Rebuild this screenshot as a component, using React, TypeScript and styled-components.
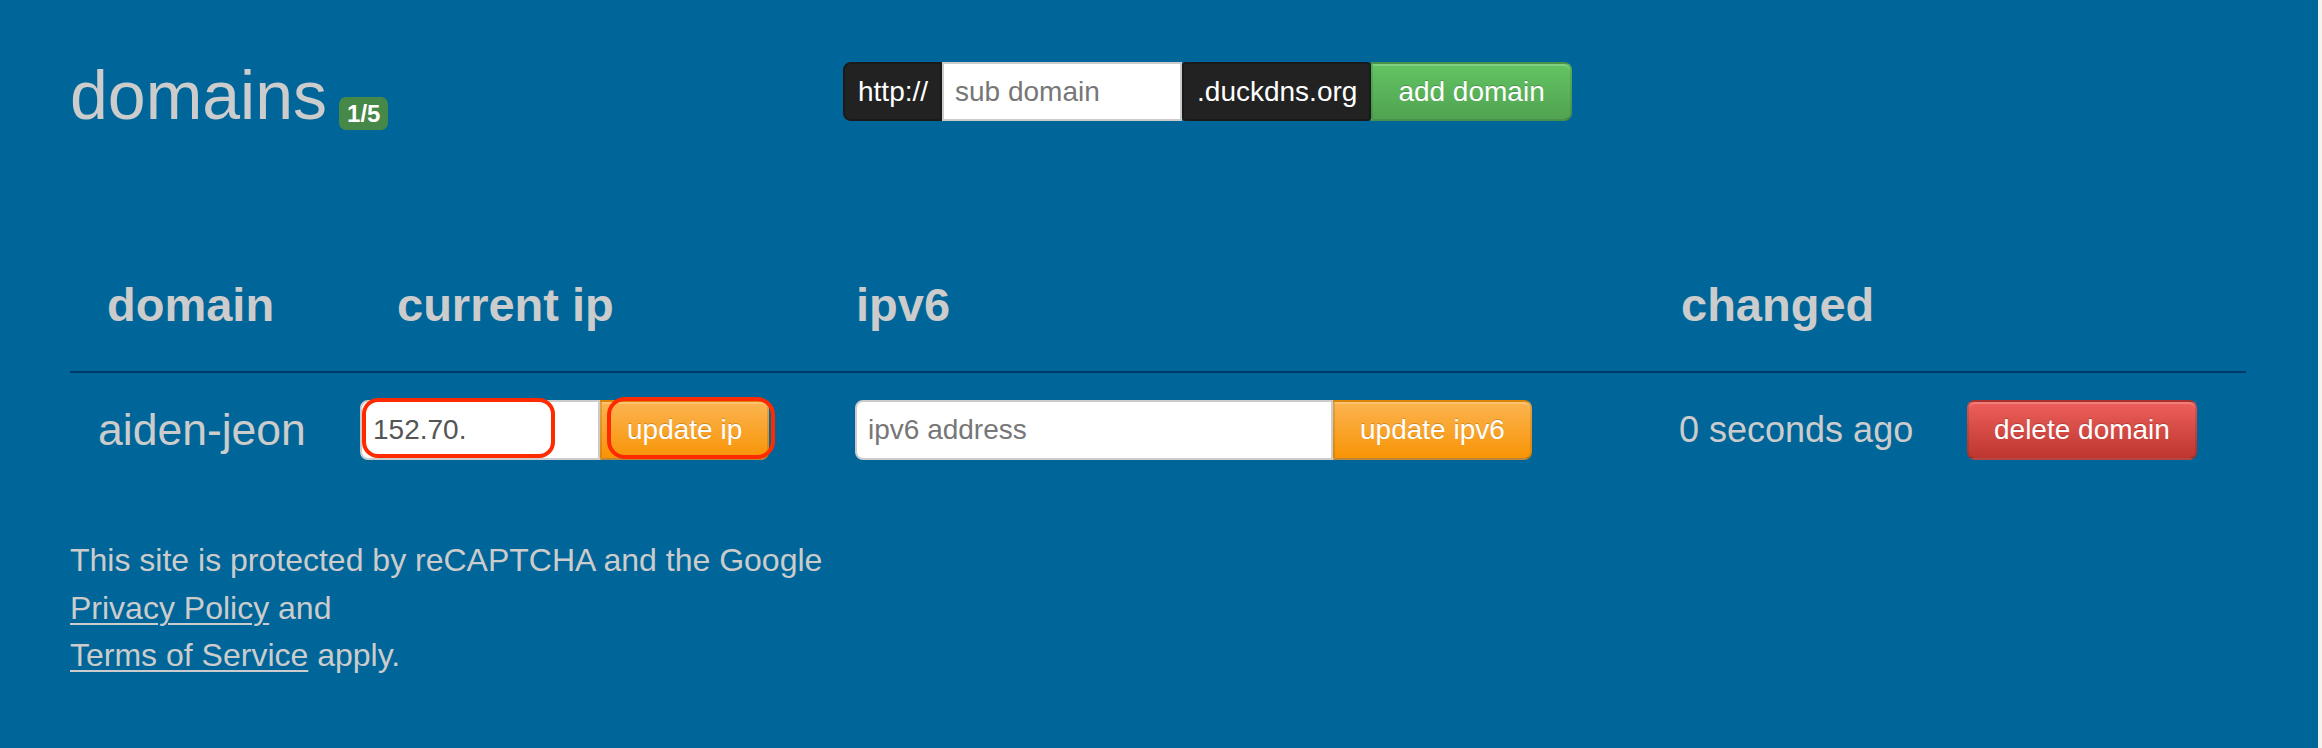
import React from "react";
import styled, { createGlobalStyle } from "styled-components";

const Global = createGlobalStyle`
  html, body { margin: 0; padding: 0; background: #f4f3ef; }
  body { font-family: "Liberation Sans", Arial, Helvetica, sans-serif; }
  * { box-sizing: border-box; }
`;

const Page = styled.div`
  position: relative;
  width: calc(100% - 4px);
  min-height: 748px;
  background: #006699;
  padding: 0 72px 0 70px;
  color: #cccccc;
`;

const TopBar = styled.div`
  display: grid;
  grid-template-columns: 773px auto;
  align-items: start;
  padding-top: 61px;
  height: 129px;
`;

const Title = styled.h1`
  margin: 0;
  font-size: 68px;
  line-height: 68px;
  font-weight: 400;
  color: #cccccc;
  white-space: nowrap;
`;

const Badge = styled.span`
  display: inline-block;
  margin-left: 12px;
  padding: 5px 8px 4px;
  font-size: 24px;
  line-height: 24px;
  font-weight: 700;
  color: #ffffff;
  background: #468847;
  border-radius: 7px;
  vertical-align: -3px;
`;

const AddForm = styled.div`
  display: flex;
  height: 59px;
  margin-top: 1px;
`;

const AddOn = styled.span<{ $radius: string }>`
  display: flex;
  align-items: center;
  height: 100%;
  padding: 0 12px 0 13px;
  background: #222222;
  border: 2px solid #1a1a1a;
  border-radius: ${(p) => p.$radius};
  color: #ffffff;
  font-size: 28px;
  white-space: nowrap;
`;

const TextInput = styled.input<{ $w: number; $radius: string }>`
  width: ${(p) => p.$w}px;
  height: 100%;
  margin: 0;
  padding: 0 11px;
  border: 2px solid #cccccc;
  border-radius: ${(p) => p.$radius};
  background: #ffffff;
  color: #555555;
  font-family: "Liberation Sans", Arial, sans-serif;
  font-size: 28px;
  outline: none;
  &::placeholder {
    color: #777777;
  }
`;

const Button = styled.button<{ $tone: "success" | "warning" | "danger"; $radius: string }>`
  height: 100%;
  margin: 0;
  padding: 0 25px;
  font-family: "Liberation Sans", Arial, sans-serif;
  font-size: 28px;
  color: #ffffff;
  white-space: nowrap;
  text-shadow: 0 -1px 0 rgba(0, 0, 0, 0.2);
  border: 2px solid rgba(0, 0, 0, 0.1);
  border-bottom-color: rgba(0, 0, 0, 0.25);
  border-radius: ${(p) => p.$radius};
  box-shadow: inset 0 2px 0 rgba(255, 255, 255, 0.2);
  background: ${(p) =>
    p.$tone === "success"
      ? "linear-gradient(#62c462, #51a351)"
      : p.$tone === "warning"
      ? "linear-gradient(#fbb450, #f89406)"
      : "linear-gradient(#ee5f5b, #bd362f)"};
  cursor: pointer;
`;

const Table = styled.div`
  display: grid;
  grid-template-columns: 290px 495px 824px 288px 1fr;
  margin-top: 152px;
`;

const Th = styled.div<{ $pl: number }>`
  padding: 0 0 43px ${(p) => p.$pl}px;
  font-size: 47px;
  line-height: 47px;
  font-weight: 700;
  color: #cccccc;
  border-bottom: 2px solid #01386b;
  white-space: nowrap;
`;

const Td = styled.div<{ $pl: number }>`
  display: flex;
  align-items: center;
  height: 114px;
  padding: 27px 0 27px ${(p) => p.$pl}px;
  white-space: nowrap;
`;

const DomainName = styled.span`
  font-size: 44.5px;
  color: #cccccc;
`;

const TimeAgo = styled.span`
  font-size: 36px;
  color: #cccccc;
`;

const Group = styled.div`
  position: relative;
  display: flex;
  height: 60px;
`;

const Mark = styled.div<{ $r: number }>`
  position: absolute;
  border: 4px solid #ff2a00;
  border-radius: ${(p) => p.$r}px;
  pointer-events: none;
`;

const Footer = styled.p`
  margin: 50px 0 0;
  font-size: 32px;
  line-height: 47.5px;
  color: #cccccc;
`;

const FootLink = styled.a`
  color: #cccccc;
  text-decoration: underline;
  text-decoration-thickness: 2px;
  text-underline-offset: 4px;
`;

export default function App() {
  return (
    <>
      <Global />
      <Page>
        <TopBar>
          <Title>
            domains<Badge>1/5</Badge>
          </Title>
          <AddForm>
            <AddOn $radius="8px 0 0 8px">http://</AddOn>
            <TextInput $w={240} $radius="0" placeholder="sub domain" />
            <AddOn $radius="4px">.duckdns.org</AddOn>
            <Button $tone="success" $radius="0 8px 8px 0">
              add domain
            </Button>
          </AddForm>
        </TopBar>

        <Table>
          <Th $pl={37}>domain</Th>
          <Th $pl={37}>current ip</Th>
          <Th $pl={1}>ipv6</Th>
          <Th $pl={2}>changed</Th>
          <Th $pl={0}></Th>

          <Td $pl={28}>
            <DomainName>aiden-jeon</DomainName>
          </Td>
          <Td $pl={0}>
            <Group>
              <TextInput $w={240} $radius="8px 0 0 8px" defaultValue="152.70." />
              <Button $tone="warning" $radius="0 8px 8px 0">
                update ip
              </Button>
              <Mark $r={16} style={{ left: 2, top: -2, width: 193, height: 60 }} />
              <Mark $r={18} style={{ left: 247, top: -3, width: 168, height: 62 }} />
            </Group>
          </Td>
          <Td $pl={0}>
            <Group>
              <TextInput $w={478} $radius="8px 0 0 8px" placeholder="ipv6 address" />
              <Button $tone="warning" $radius="0 8px 8px 0">
                update ipv6
              </Button>
            </Group>
          </Td>
          <Td $pl={0}>
            <TimeAgo>0 seconds ago</TimeAgo>
          </Td>
          <Td $pl={0}>
            <Group>
              <Button $tone="danger" $radius="8px">
                delete domain
              </Button>
            </Group>
          </Td>
        </Table>

        <Footer>
          This site is protected by reCAPTCHA and the Google
          <br />
          <FootLink href="#">Privacy Policy</FootLink> and
          <br />
          <FootLink href="#">Terms of Service</FootLink> apply.
        </Footer>
      </Page>
    </>
  );
}
